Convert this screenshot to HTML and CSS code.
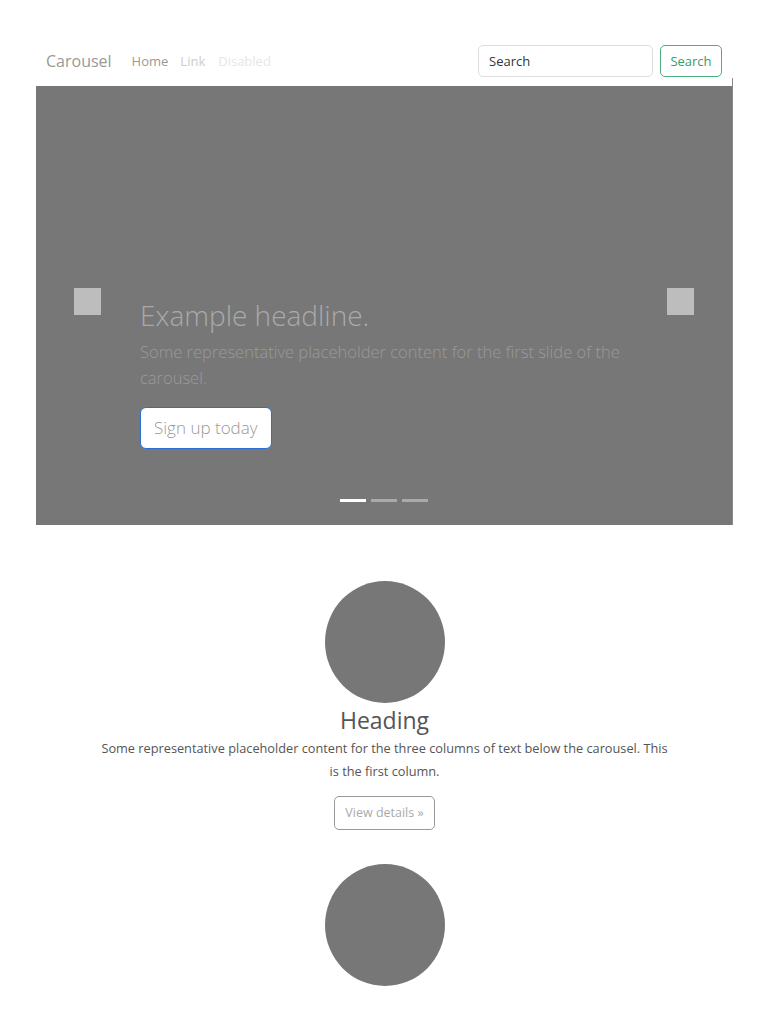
FILE: index.html
```html
<!DOCTYPE html>
<html lang="en">
<head>
<meta charset="utf-8">
<title>Carousel</title>
<link rel="stylesheet" href="styles.css">
</head>
<body>
<div class="page">
  <nav class="navbar">
    <div class="nav-left">
      <span class="brand">Carousel</span>
      <span class="nav-link active">Home</span>
      <span class="nav-link">Link</span>
      <span class="nav-link disabled">Disabled</span>
    </div>
    <form class="search">
      <input class="search-input" type="text" placeholder="Search" value="Search">
      <button class="search-btn" type="button">Search</button>
    </form>
  </nav>
  <div class="carousel">
    <span class="edge"></span>
    <span class="control prev"></span>
    <span class="control next"></span>
    <div class="caption">
      <h1 class="headline">Example headline.</h1>
      <p class="lead">Some representative placeholder content for the first slide of the carousel.</p>
      <span class="signup">Sign up today</span>
    </div>
    <div class="indicators">
      <span class="ind on"></span>
      <span class="ind"></span>
      <span class="ind"></span>
    </div>
  </div>
  <section class="marketing">
    <div class="col">
      <div class="circle"></div>
      <h2 class="heading">Heading</h2>
      <p class="text">Some representative placeholder content for the three columns of text below the carousel. This is the first column.</p>
      <span class="details">View details &raquo;</span>
    </div>
    <div class="col">
      <div class="circle"></div>
    </div>
  </section>
</div>
</body>
</html>
```
FILE: styles.css
```css
* { box-sizing: border-box; }
html, body { margin: 0; padding: 0; background: #fff; }
body {
  font-family: "Open Sans", "Noto Sans", "Liberation Sans", sans-serif;
  color: #555;
}
.page {
  width: 697px;
  margin-left: 36px;
}
.navbar {
  display: flex;
  align-items: flex-start;
  justify-content: space-between;
  padding: 45px 11px 0 10px;
  height: 86px;
}
.nav-left {
  display: flex;
  align-items: center;
  height: 32px;
}
.brand {
  font-size: 16px;
  color: #999;
  margin-right: 20px;
}
.nav-link {
  font-size: 13px;
  color: #ccc;
  margin-right: 13px;
}
.nav-link.active { color: #999; margin-right: 12px; }
.nav-link.disabled { color: #e6e6e6; }
.search {
  display: flex;
  gap: 7px;
  margin: 0;
}
.search-input {
  width: 175px;
  height: 32px;
  border: 1px solid #dedede;
  border-radius: 5px;
  padding: 0 10px;
  font-family: inherit;
  font-size: 13px;
  color: #333;
  outline: none;
}
.search-btn {
  height: 32px;
  width: 62px;
  border: 1px solid #4caf7d;
  border-radius: 5px;
  background: #fff;
  color: #3a9a6a;
  font-family: inherit;
  font-size: 13px;
  padding: 0;
}
.carousel {
  position: relative;
  height: 439px;
  background: #777;
  border-right: 1px solid #8a8a8a;
}
.edge {
  position: absolute;
  right: -1px;
  top: -8px;
  width: 1px;
  height: 8px;
  background: #8a8a8a;
}
.control {
  position: absolute;
  top: 202px;
  width: 27px;
  height: 27px;
  background: #bdbdbd;
}
.control.prev { left: 38px; }
.control.next { left: 631px; }
.caption {
  position: absolute;
  left: 104px;
  right: 104px;
  bottom: 76px;
}
.headline {
  margin: 0 0 5px;
  font-size: 28px;
  font-weight: 300;
  color: #aaa;
  line-height: 1.2;
  position: relative;
  top: -1px;
}
.lead {
  margin: 0 0 16px;
  font-size: 16.5px;
  font-weight: 300;
  color: #9a9a9a;
  line-height: 26px;
}
.signup {
  display: inline-block;
  height: 42px;
  line-height: 40px;
  padding: 0 13px;
  background: #fff;
  border: 1px solid #2b6fd6;
  border-radius: 6px;
  font-size: 17px;
  font-weight: 300;
  color: #999;
}
.indicators {
  position: absolute;
  left: 0;
  right: 0;
  top: 413px;
  display: flex;
  justify-content: center;
  gap: 5px;
}
.ind {
  width: 26px;
  height: 3px;
  background: #aaa;
}
.ind.on { background: #fff; }
.marketing {
  padding-top: 56px;
  display: flex;
  flex-direction: column;
  align-items: center;
}
.col {
  display: flex;
  flex-direction: column;
  align-items: center;
  margin-bottom: 34px;
}
.circle {
  width: 120px;
  height: 122px;
  border-radius: 50%;
  background: #777;
}
.heading {
  margin: 2px 0 2px;
  font-size: 23px;
  font-weight: 400;
  color: #555;
  line-height: 30px;
}
.text {
  margin: 0 0 13px;
  width: 574px;
  text-align: center;
  font-size: 12.75px;
  line-height: 23px;
  color: #555;
}
.details {
  display: inline-block;
  height: 34px;
  line-height: 32px;
  padding: 0 10px;
  border: 1px solid #999;
  border-radius: 5px;
  font-size: 12.5px;
  color: #aaa;
}
```
